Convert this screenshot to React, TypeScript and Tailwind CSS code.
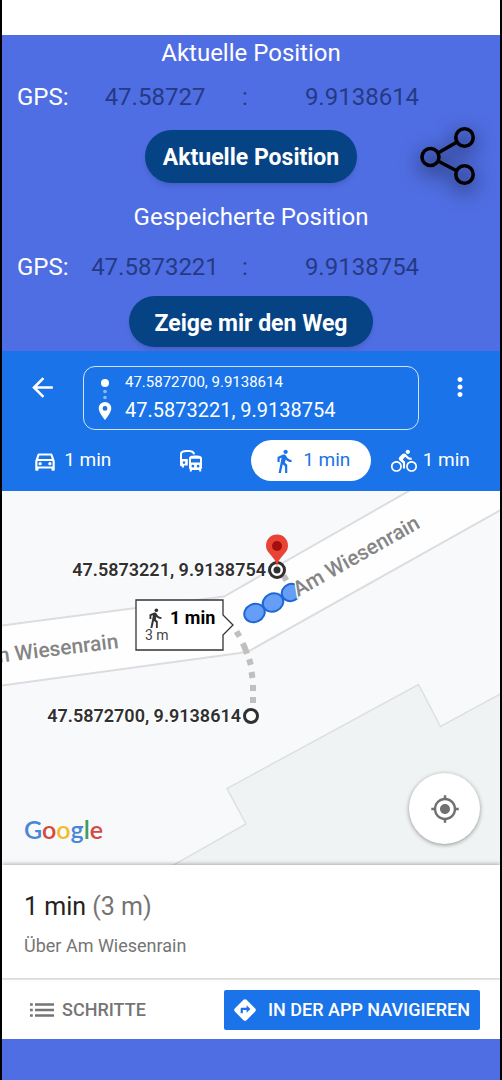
import type { ReactNode } from 'react'
import {
  MdArrowBack,
  MdDirections,
  MdDirectionsBike,
  MdDirectionsWalk,
  MdMoreVert,
  MdMyLocation,
  MdOutlineDirectionsCar,
} from 'react-icons/md'

interface Position {
  lat: string
  lng: string
}

const CURRENT: Position = { lat: '47.58727', lng: '9.9138614' }
const SAVED: Position = { lat: '47.5873221', lng: '9.9138754' }

// dashes of the footpath, in map units
const FOOTPATH = [
  { x: 236, y: 143, angle: 30 },
  { x: 242, y: 155, angle: 25 },
  { x: 244, y: 160, angle: 20 },
  { x: 248, y: 171, angle: 15 },
  { x: 250, y: 184, angle: 8 },
  { x: 251, y: 197, angle: 0 },
  { x: 251, y: 209, angle: 0 },
  { x: 283, y: 87, angle: 30 },
]

const GOOGLE = [
  { letter: 'G', color: 'text-[#4a86d8]' },
  { letter: 'o', color: 'text-[#d5483f]' },
  { letter: 'o', color: 'text-[#efbd2e]' },
  { letter: 'g', color: 'text-[#4a86d8]' },
  { letter: 'l', color: 'text-[#3d9d58]' },
  { letter: 'e', color: 'text-[#d5483f]' },
]

function PositionRow({ position }: { position: Position }) {
  return (
    <div className="grid grid-cols-[70fr_166fr_14fr_220fr] pr-7 text-center text-2xl leading-9 text-[#253a85]">
      <span className="pl-[15px] text-left text-white">GPS:</span>
      <span>{position.lat}</span>
      <span>:</span>
      <span>{position.lng}</span>
    </div>
  )
}

function ShareIcon() {
  return (
    <svg
      viewBox="0 0 56 58"
      className="h-[58px] w-14 overflow-visible drop-shadow-[0_6px_10px_rgba(0,0,0,0.9)]"
      fill="none"
      stroke="#000"
      strokeWidth="3.6"
    >
      <circle cx="10.5" cy="30" r="8.5" />
      <circle cx="44.5" cy="10.5" r="8.7" />
      <circle cx="44.5" cy="47.5" r="8.7" />
      <path d="M18 26 37 15M18 34l19 10" />
    </svg>
  )
}

function TransitIcon() {
  return (
    <svg viewBox="0 0 22 22" className="size-[22px]" fill="currentColor" fillRule="evenodd">
      {/* bus behind */}
      <path d="M0 15V4.500C0 1 2.500 0 7.500 0 12 0 14.500 .8 15 4.200H13C12.500 2.600 11 2 7.500 2 3.500 2 2 2.700 2 4.500V9h5.800v6.500H4V17.500H2V16.500C.8 16.300 0 15.800 0 15zM4 11.300a1.300 1.300 0 1 0 0 2.600 1.300 1.300 0 0 0 0-2.600z" />
      {/* bus in front */}
      <path d="M9 8.500C9 6.300 11 5.500 15.500 5.500S22 6.300 22 8.500v9.300c0 .6-.3 1.100-.8 1.500V21.500h-2V20h-7.400v1.500h-2v-2.200c-.5-.4-.8-.9-.8-1.500zM11 12.500h9V8.700h-9zM12.900 14.800a1.400 1.400 0 1 0 0 2.800 1.400 1.400 0 0 0 0-2.800zM18.100 14.800a1.400 1.400 0 1 0 0 2.800 1.400 1.400 0 0 0 0-2.800z" />
    </svg>
  )
}

function StepsIcon() {
  return (
    <svg viewBox="0 0 24 16" className="h-4 w-6" stroke="#757575" strokeWidth="2.600">
      <path d="M0 2.500h2.800M0 8h2.800M0 13.500h2.800M5 2.500h19M5 8h19M5 13.500h19" />
    </svg>
  )
}

function ModeButton({
  icon,
  label,
  text,
  active,
}: {
  icon: ReactNode
  label: string
  text?: string
  active?: boolean
}) {
  return (
    <button
      type="button"
      aria-label={label}
      aria-pressed={!!active}
      className={`flex h-[41px] items-center justify-center gap-1.5 rounded-full text-[19px] ${
        active ? 'bg-white text-[#1a73e8]' : 'text-white'
      }`}
    >
      {icon}
      {text && <span>{text}</span>}
    </button>
  )
}

function RouteMap() {
  return (
    <svg
      viewBox="0 0 498 374"
      preserveAspectRatio="xMidYMid slice"
      className="block h-[374px] w-full bg-[#f8f9fb]"
    >
      {/* building */}
      <path
        d="M168 376 244 333 225 297.500 416.500 193.500 438.500 235.500 500 202V376z"
        fill="#f0f3f4"
        stroke="#dddfe1"
        strokeWidth="1.500"
      />
      {/* road */}
      <path
        d="M-4 135 222 105.500 412-3H504V16L248 159.500 238 162-4 195z"
        fill="#fefefe"
        stroke="#dcdde0"
        strokeWidth="2"
      />

      {FOOTPATH.map((dash) => (
        <rect
          key={`${dash.x}-${dash.y}`}
          x={dash.x - 3}
          y={dash.y - 3}
          width="6"
          height="6"
          fill="#bfbfbf"
          transform={`rotate(-${dash.angle} ${dash.x} ${dash.y})`}
        />
      ))}

      <g fill="#669df6" stroke="#1c69d4" strokeWidth="2">
        <ellipse cx="289" cy="101.500" rx="9.500" ry="8.500" transform="rotate(-25 289 101.500)" />
        <ellipse cx="271" cy="111.500" rx="10.500" ry="9" transform="rotate(-25 271 111.500)" />
        <ellipse cx="252.500" cy="122" rx="10.500" ry="9" transform="rotate(-25 252.500 122)" />
      </g>

      <g
        fill="#858585"
        stroke="#fefefe"
        strokeWidth="3"
        paintOrder="stroke"
        fontSize="21"
        fontWeight="500"
      >
        <text x="296" y="106" transform="rotate(-29.500 296 106)">
          Am Wiesenrain
        </text>
        <text x="117" y="157" textAnchor="end" transform="rotate(-7 117 157)">
          Am Wiesenrain
        </text>
      </g>

      <g fill="#303030" stroke="#fff" strokeWidth="2" paintOrder="stroke" fontSize="18" fontWeight="600">
        <text x="264" y="85" textAnchor="end">
          47.5873221, 9.9138754
        </text>
        <text x="239" y="231" textAnchor="end">
          47.5872700, 9.9138614
        </text>
      </g>

      <circle cx="249" cy="225" r="6.500" fill="#fff" stroke="#303030" strokeWidth="3" />
      <circle cx="275" cy="79" r="7.500" fill="#fff" stroke="#303030" strokeWidth="3" />
      <circle cx="275" cy="79" r="3.500" fill="#303030" />
      <path
        d="M275 76c-1-7-4-9-7.500-13.500a11 11 0 1 1 15 0C279 67 276 69 275 76z"
        fill="#e94335"
      />
      <circle cx="275" cy="55" r="5" fill="#a50e0e" />

      {/* duration callout */}
      <path
        d="M134 109h87v15l10 10-10 10v15h-87z"
        fill="#fff"
        stroke="#333"
        strokeWidth="1.300"
      />
      <MdDirectionsWalk x="142" y="116" size="22" color="#333" />
      <text x="168" y="133" fontSize="18" fontWeight="700" fill="#000">
        1 min
      </text>
      <text x="143" y="149" fontSize="14" fill="#444">
        3 m
      </text>
    </svg>
  )
}

export default function App() {
  return (
    <div className="flex min-h-screen flex-col border-x-2 border-black bg-[#506ee3] font-['Roboto',sans-serif]">
      <div className="h-[35px] bg-white" />

      <section className="pb-1 text-center text-2xl leading-9 text-white">
        <h1>Aktuelle Position</h1>
        <div className="mt-2">
          <PositionRow position={CURRENT} />
        </div>
        <div className="mt-3 grid grid-cols-[1fr_auto_1fr] items-center">
          <button
            type="button"
            className="col-start-2 h-[53px] rounded-full bg-[#064384] px-[18px] pt-1 text-[23px] font-bold shadow-md"
          >
            Aktuelle Position
          </button>
          <button type="button" aria-label="Teilen" className="mr-6 justify-self-end">
            <ShareIcon />
          </button>
        </div>

        <h2 className="mt-3.5">Gespeicherte Position</h2>
        <div className="mt-3.5">
          <PositionRow position={SAVED} />
        </div>
        <button
          type="button"
          className="mx-auto mt-[11px] block h-[51px] rounded-full bg-[#064384] px-[26px] pt-1 text-[23px] font-bold shadow-md"
        >
          Zeige mir den Weg
        </button>
      </section>

      <header className="bg-[#1a73e8] pb-2.5 text-white">
        <div className="flex items-start pt-[15px]">
          <button type="button" aria-label="Zurück" className="mt-1.5 ml-[25px]">
            <MdArrowBack size={31} />
          </button>
          <button
            type="button"
            className="ml-[25px] flex h-16 flex-1 items-center gap-[13px] rounded-xl border border-white/80 pl-3.5 text-left"
          >
            <svg viewBox="0 0 14 46" className="h-[46px] w-3.5" fill="currentColor">
              <circle cx="7" cy="8" r="4" />
              <circle cx="7" cy="16.500" r="1.800" opacity="0.5" />
              <circle cx="7" cy="22.500" r="1.800" opacity="0.5" />
              <path
                fillRule="evenodd"
                d="M7 27a6.300 6.300 0 0 0-6.300 6.300C.7 38 7 45 7 45s6.300-7 6.300-11.700A6.300 6.300 0 0 0 7 27zm0 4a2.400 2.400 0 1 1 0 4.800A2.400 2.400 0 0 1 7 31z"
              />
            </svg>
            <span className="flex flex-col pb-1">
              <span className="text-[15px] leading-7">47.5872700, 9.9138614</span>
              <span className="text-xl leading-7">47.5873221, 9.9138754</span>
            </span>
          </button>
          <button type="button" aria-label="Mehr" className="mt-1.5 mr-[25px] ml-[26px]">
            <MdMoreVert size={30} />
          </button>
        </div>

        <div className="mt-2.5 grid grid-cols-4 px-2.5">
          <ModeButton icon={<MdOutlineDirectionsCar size={26} />} label="Auto" text="1 min" />
          <ModeButton icon={<TransitIcon />} label="Öffentliche Verkehrsmittel" />
          <ModeButton icon={<MdDirectionsWalk size={26} />} label="Zu Fuß" text="1 min" active />
          <ModeButton icon={<MdDirectionsBike size={26} />} label="Fahrrad" text="1 min" />
        </div>
      </header>

      <main className="relative">
        <RouteMap />
        <p
          className="absolute bottom-5 left-[22px] font-['Lato',sans-serif] text-[25px] leading-8 font-semibold"
          aria-label="Google"
        >
          {GOOGLE.map((item, i) => (
            <span key={i} className={item.color}>
              {item.letter}
            </span>
          ))}
        </p>
        <button
          type="button"
          aria-label="Mein Standort"
          className="absolute right-5 bottom-[21px] flex size-[71px] items-center justify-center rounded-full bg-white text-[#707070] shadow-[0_1px_4px_rgba(0,0,0,0.4)]"
        >
          <MdMyLocation size={30} />
        </button>
      </main>

      <section className="relative bg-white px-[22px] shadow-[0_-1px_4px_rgba(0,0,0,0.3)]">
        <p className="pt-[22px] text-[25px] leading-10 text-[#222]">
          1 min <span className="text-[#757575]">(3 m)</span>
        </p>
        <p className="pt-[3px] pb-4 text-lg leading-8 text-[#757575]">Über Am Wiesenrain</p>
      </section>
      <div className="flex h-[61px] items-center justify-between border-t-2 border-[#ececee] bg-white pr-5 pl-7 text-lg">
        <button type="button" className="flex items-center gap-2 font-medium text-[#757575]">
          <StepsIcon />
          SCHRITTE
        </button>
        <a
          href="#navigation"
          className="flex h-10 items-center gap-2.5 rounded-xs bg-[#1a73e8] pr-2.5 pl-2 font-medium text-white"
        >
          <MdDirections size={26} />
          IN DER APP NAVIGIEREN
        </a>
      </div>
    </div>
  )
}
